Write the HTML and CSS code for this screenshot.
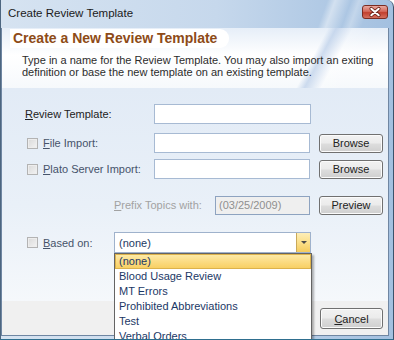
FILE: index.html
```html
<!DOCTYPE html>
<html lang="en">
<head>
    <meta charset="UTF-8">
    <title>Create Review Template</title>
    <link rel="stylesheet" href="styles.css">
</head>
<body>

    <div class="window">
        <div class="titlebar">
            <span class="title">Create Review Template</span>
            <button class="close-btn">
                <svg width="26" height="14" viewBox="0 0 26 14">
                    <path d="M9 3.5 L17 10.5 M17 3.5 L9 10.5" stroke="#6b2218" stroke-width="4" stroke-linecap="round"/>
                    <path d="M9 3.5 L17 10.5 M17 3.5 L9 10.5" stroke="#ffffff" stroke-width="2.2" stroke-linecap="round"/>
                </svg>
            </button>
        </div>

        <div class="client">
            <!-- Header banner -->
            <div class="banner">
                <h1 class="banner-title">Create a New Review Template</h1>
                <p class="banner-text">Type in a name for the Review Template. You may also import an exiting<br>definition or base the new template on an existing template.</p>
            </div>

            <div class="form">
                <div class="row row-name">
                    <label class="label"><u>R</u>eview Template:</label>
                    <input class="field" type="text">
                </div>

                <div class="row row-file">
                    <label class="label check-label"><span class="check"></span><u>F</u>ile Import:</label>
                    <input class="field" type="text">
                    <button class="btn">Browse</button>
                </div>

                <div class="row row-plato">
                    <label class="label check-label"><span class="check"></span><u>P</u>lato Server Import:</label>
                    <input class="field" type="text">
                    <button class="btn">Browse</button>
                </div>

                <div class="row row-prefix">
                    <label class="prefix-label"><u>P</u>refix Topics with:</label>
                    <div class="field field-disabled">(03/25/2009)</div>
                    <button class="btn">Preview</button>
                </div>

                <div class="row row-based">
                    <label class="label based-label check-label"><span class="check"></span><u>B</u>ased on:</label>
                    <div class="combo">
                        <span class="combo-value">(none)</span>
                        <span class="combo-arrow"></span>
                    </div>
                </div>
            </div>

            <div class="footer">
                <button class="btn btn-cancel"><u>C</u>ancel</button>
            </div>
        </div>

        <!-- open dropdown of the "Based on" combo -->
        <ul class="dropdown">
            <li class="selected">(none)</li>
            <li>Blood Usage Review</li>
            <li>MT Errors</li>
            <li>Prohibited Abbreviations</li>
            <li>Test</li>
            <li>Verbal Orders</li>
        </ul>
    </div>

</body>
</html>
```

FILE: styles.css
```css
body {
    margin: 0;
    padding: 0;
    font-family: "Liberation Sans", Arial, sans-serif;
    font-size: 11px;
    color: #222;
    background-color: #ffffff;
}

.window {
    position: relative;
    width: 394px;
    height: 340px;
    box-sizing: border-box;
    display: flex;
    flex-direction: column;
    padding: 0 4px 3px 0;
    border-left: 1px solid #4d6680;
    border-right: 1px solid #3b526b;
    border-bottom: 1px solid #2f6f8f;
    border-radius: 0 7px 0 0;
    background: linear-gradient(to right, #d6e3f1 0%, #c6d8ec 55%, #a3c0e0 100%);
    overflow: hidden;
}

/* Title bar */
.titlebar {
    height: 28px;
    flex-shrink: 0;
    display: flex;
    align-items: flex-start;
    background: linear-gradient(110deg, transparent 82%, rgba(255, 255, 255, 0.45) 84%, transparent 88%, rgba(255, 255, 255, 0.3) 90%, transparent 93%);
}

.title {
    margin: 7px 0 0 7px;
    font-size: 11.5px;
    color: #1b1b1b;
}

.close-btn {
    margin: 5px 1px 0 auto;
    width: 26px;
    height: 14px;
    padding: 0;
    border: 1px solid #7b2c22;
    border-radius: 3px;
    background: linear-gradient(to bottom, #e8a89f 0%, #d4685a 45%, #c2402f 55%, #d4705f 100%);
    display: flex;
    align-items: center;
    justify-content: center;
}

.close-btn svg {
    display: block;
}

/* Client area */
.client {
    flex: 1;
    display: flex;
    flex-direction: column;
    border: 1px solid #6f86a2;
    border-top: none;
    background-color: #ffffff;
}

.banner {
    height: 60px;
    flex-shrink: 0;
    box-sizing: border-box;
    padding-top: 1px;
    background:
        linear-gradient(118deg, transparent 78%, rgba(185, 205, 232, 0.7) 80%, rgba(255, 255, 255, 0.2) 84%, transparent 90%),
        linear-gradient(to bottom, #e6eef8 0%, #ffffff 45%, #f6f9fc 100%);
}

.banner-title {
    display: inline-block;
    margin: 0 0 0 8px;
    padding: 1px 12px 2px 3px;
    height: 16px;
    line-height: 16px;
    font-size: 14px;
    font-weight: bold;
    color: #8e4b17;
    background-color: #ffffff;
    border-radius: 0 9px 9px 0;
}

.banner-text {
    margin: 6px 0 0 20px;
    line-height: 12px;
    color: #2c2c2c;
}

/* Form rows */
.form {
    flex: 1;
    padding: 16px 0 0 23px;
    background: linear-gradient(to bottom, #e2ebf6 0%, #e9f0f8 55%, #f5f8fb 100%);
}

.row {
    display: flex;
    align-items: center;
    height: 20px;
}

.row-file {
    margin-top: 9px;
}

.row-plato {
    margin-top: 6px;
}

.row-prefix {
    margin-top: 16px;
}

.row-based {
    margin-top: 17px;
    height: 21px;
}

.label {
    width: 129px;
    flex-shrink: 0;
    color: #222;
}

.check-label {
    display: flex;
    align-items: center;
    color: #46536a;
}

.based-label {
    width: 89px;
}

.check {
    width: 11px;
    height: 11px;
    box-sizing: border-box;
    margin: 0 5px 0 2px;
    border: 1px solid #b3b3b3;
    background: linear-gradient(135deg, #d9d9d9, #f3f3f3);
    box-shadow: inset 0 0 0 1px #ededed;
}

.field {
    width: 157px;
    height: 20px;
    box-sizing: border-box;
    margin: 0;
    padding: 0 3px;
    border: 1px solid #a7bad3;
    background-color: #ffffff;
    font-family: inherit;
    font-size: 11px;
}

.row-file .field,
.row-plato .field {
    width: 156px;
}

.prefix-label {
    width: 190px;
    flex-shrink: 0;
    box-sizing: border-box;
    padding-left: 89px;
    color: #a2a2a2;
}

.field-disabled {
    width: 95px;
    height: 19px;
    line-height: 17px;
    border-color: #8ea3c0;
    background-color: #efefef;
    color: #8f8f8f;
}

.btn {
    width: 64px;
    height: 19px;
    margin-left: 9px;
    padding: 0;
    border: 1px solid #707070;
    border-radius: 3px;
    background: linear-gradient(to bottom, #f2f2f2 0%, #ebebeb 48%, #dddddd 52%, #cfcfcf 100%);
    box-shadow: inset 0 0 0 1px #fbfbfb;
    font-family: inherit;
    font-size: 11px;
    color: #222;
}

/* Combo box */
.combo {
    position: relative;
    width: 197px;
    height: 21px;
    box-sizing: border-box;
    border: 1px solid #9fb2cc;
    background-color: #ffffff;
    display: flex;
    align-items: center;
}

.combo-value {
    padding-left: 4px;
    color: #1d3a63;
}

.combo-arrow {
    margin-left: auto;
    width: 13px;
    height: 19px;
    border-left: 1px solid #c9a95a;
    background: linear-gradient(to bottom, #fdeeb8 0%, #fbdf8a 50%, #f5cb5c 100%);
    position: relative;
}

.combo-arrow::after {
    content: "";
    position: absolute;
    left: 4px;
    top: 8px;
    border-left: 3px solid transparent;
    border-right: 3px solid transparent;
    border-top: 3px solid #4a4a4a;
}

/* Footer */
.footer {
    height: 34px;
    flex-shrink: 0;
    box-sizing: border-box;
    display: flex;
    justify-content: flex-end;
    align-items: flex-start;
    padding: 7px 5px 0 0;
    background-color: #f0f0f0;
}

.btn-cancel {
    width: 63px;
    height: 21px;
}

/* Open dropdown list */
.dropdown {
    position: absolute;
    left: 113px;
    top: 253px;
    width: 196px;
    margin: 0;
    padding: 0;
    list-style-type: none;
    border: 1px solid #646464;
    background-color: #ffffff;
    box-shadow: 2px 2px 2px rgba(0, 0, 0, 0.3);
}

.dropdown li {
    height: 15px;
    line-height: 15px;
    padding-left: 4px;
    color: #1b3866;
}

.dropdown li.selected {
    height: 13px;
    line-height: 13px;
    border: 1px solid #dcb24c;
    padding-left: 3px;
    background: linear-gradient(to bottom, #fdeaa6 0%, #fbdc84 50%, #f8d064 100%);
}
```
